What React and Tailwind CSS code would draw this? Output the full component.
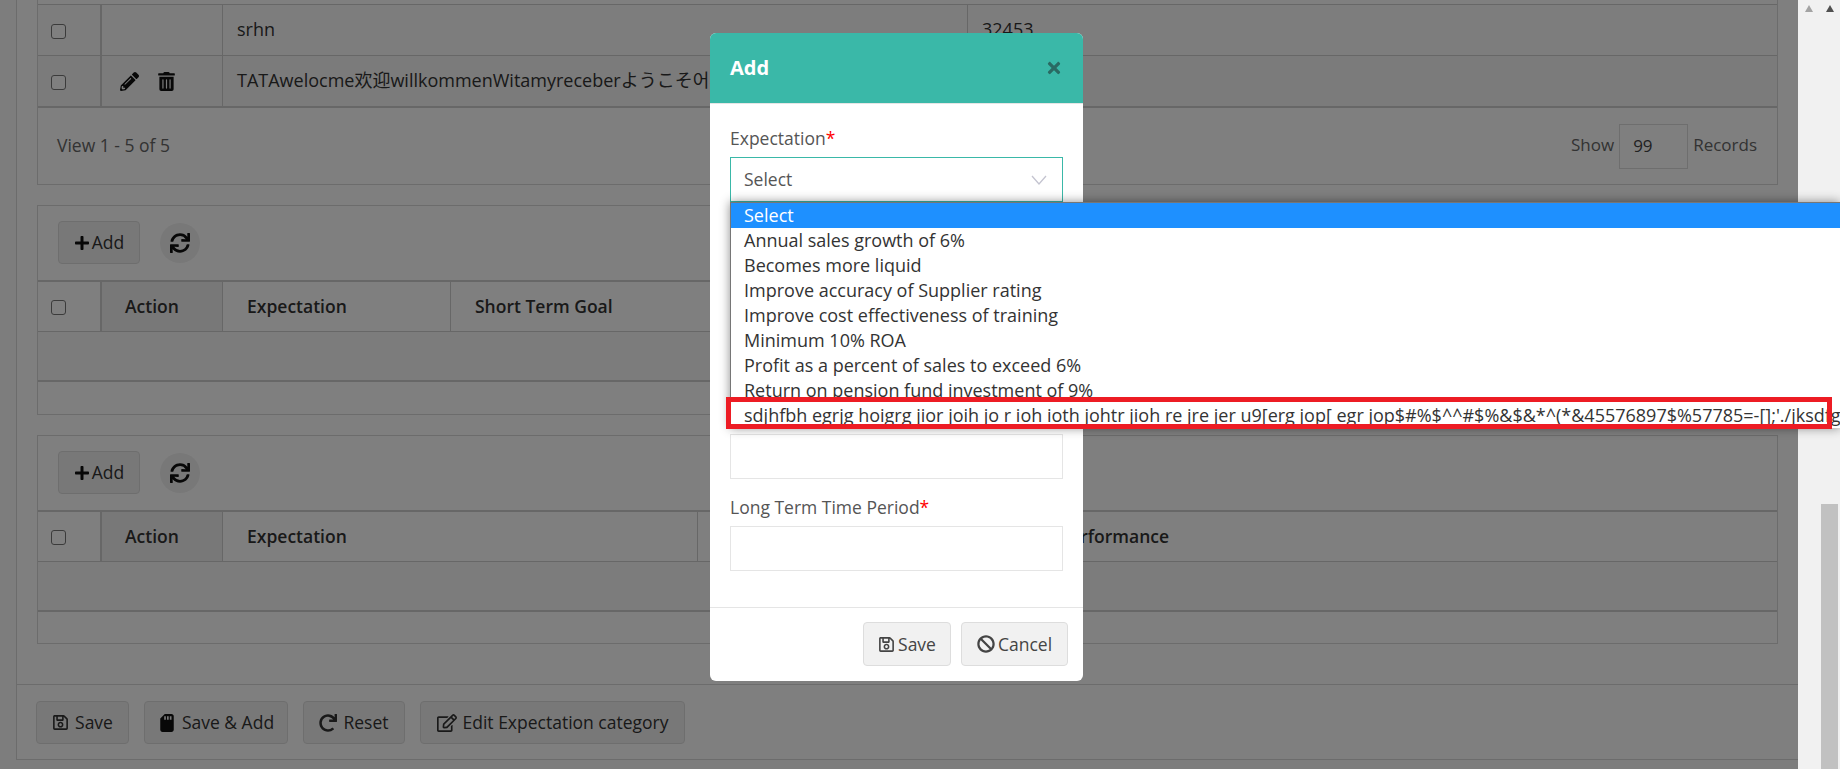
import { FaPencilAlt, FaTrashAlt, FaPlus, FaSync, FaRegSave, FaSdCard, FaRedo, FaRegEdit, FaBan, FaTimes } from "react-icons/fa";

const options = [
  "Annual sales growth of 6%",
  "Becomes more liquid",
  "Improve accuracy of Supplier rating",
  "Improve cost effectiveness of training",
  "Minimum 10% ROA",
  "Profit as a percent of sales to exceed 6%",
  "Return on pension fund investment of 9%",
  "sdjhfbh egrjg hoigrg jior joih jo r ioh ioth johtr jioh re jre jer u9[erg jop[ egr jop$#%$^^#$%&$&*^(*&45576897$%57785=-[];'./jksdfg hjkl",
];

function Check() {
  return <span className="block h-[15px] w-[15px] rounded-[3px] border border-[#767676] bg-white" />;
}

function ToolbarAndHead({ cols, heads }) {
  return (
    <>
      <div className="flex h-[74px] items-start gap-5 pl-5 pt-[15px]">
        <button className="flex h-[43px] w-[82px] items-center justify-center gap-[2px] rounded border border-[#ddd] bg-[#f1f1f1] text-[#333]">
          <FaPlus className="text-[16px] text-[#111]" />
          Add
        </button>
        <button className="mt-0.5 flex h-10 w-10 items-center justify-center rounded-full bg-[#f1f1f1]">
          <FaSync className="text-xl text-[#111]" />
        </button>
      </div>
      <div className={`grid h-[52px] border-y-2 border-b-[1px] border-[#cfcfcf] font-semibold text-[#333] ${cols}`}>
        <div className="flex items-center border-r-2 border-[#cfcfcf] pl-[13px] pt-[2px]">
          <Check />
        </div>
        <div className="flex items-center border-r border-[#cfcfcf] bg-[#f0f0f0] pl-[23px]">Action</div>
        {heads.map((h, i) => (
          <div key={h} className={`flex items-center whitespace-nowrap pl-6 ${i < heads.length - 1 ? "border-r border-[#cfcfcf]" : ""}`}>
            {h}
          </div>
        ))}
      </div>
      <div className="h-[50px] border-b-2 border-[#cfcfcf] bg-[#f9f9f9]" />
    </>
  );
}

function FooterButton({ icon, label, width }) {
  return (
    <button className={`flex h-[43px] items-center justify-center gap-[6px] rounded border border-[#ddd] bg-[#f1f1f1] text-[#333] ${width}`}>
      {icon}
      {label}
    </button>
  );
}

export default function App() {
  return (
    <div className="relative flex h-[769px] overflow-hidden font-['Open_Sans','Noto_Sans_CJK_SC',sans-serif] text-[17.5px]">
      <main className="relative w-[1798px] overflow-hidden bg-[#fafafa] pl-4">
        <div className="h-[760px] border-b border-l border-[#d8d8d8] bg-white">
          <div className="px-5">
            <div className="border-x border-b border-[#d8d8d8]">
              <div className="h-[5px] border-b border-[#cfcfcf]" />
              <div className="grid h-[51px] grid-cols-[64px_121px_745px_1fr] border-b border-[#cfcfcf] bg-[#fbfbfb] text-[18px]">
                <div className="flex items-center border-r-2 border-[#cfcfcf] pl-[13px] pt-[2px]">
                  <Check />
                </div>
                <div className="border-r border-[#cfcfcf]" />
                <div className="flex items-center border-r border-[#cfcfcf] pb-[2px] pl-[14px] text-[#333]">srhn</div>
                <div className="flex items-center pb-[2px] pl-[14px] text-[#333]">32453</div>
              </div>
              <div className="grid h-[52px] grid-cols-[64px_121px_1fr] border-b-2 border-[#cfcfcf] bg-[#f6f6f6] text-[18px]">
                <div className="flex items-center border-r-2 border-[#cfcfcf] pl-[13px] pt-[2px]">
                  <Check />
                </div>
                <div className="flex items-center gap-[18px] border-r border-[#cfcfcf] pl-[18px]">
                  <FaPencilAlt className="text-[19px] text-[#111]" />
                  <FaTrashAlt className="text-[19px] text-[#111]" />
                </div>
                <div className="flex items-center whitespace-nowrap pb-[2px] pl-[14px] text-[#333]">
                  TATAwelocme欢迎willkommenWitamyreceberようこそ어서
                </div>
              </div>
              <div className="flex h-[76px] items-center justify-between pl-[19px] pr-5 text-[#666]">
                <span className="pb-[2px]">View 1 - 5 of 5</span>
                <div className="flex items-center gap-[5px] text-[17px]">
                  <span className="pb-[2px]">Show</span>
                  <div className="flex h-[45px] w-[69px] items-center border border-[#ddd] pl-[13px] text-[#444]">99</div>
                  <span className="pb-[2px]">Records</span>
                </div>
              </div>
            </div>

            <div className="mt-5 h-[210px] border border-[#d8d8d8]">
              <ToolbarAndHead
                cols="grid-cols-[64px_121px_228px_1fr]"
                heads={["Expectation", "Short Term Goal"]}
              />
            </div>

            <div className="mt-5 h-[209px] border border-[#d8d8d8]">
              <ToolbarAndHead
                cols="grid-cols-[64px_121px_475px_243px_1fr]"
                heads={["Expectation", "Long Term Goal", "Long Term Performance"]}
              />
            </div>
          </div>

          <div className="mt-10 flex h-[75px] gap-[15px] border-t border-[#d8d8d8] pl-[19px] pt-4">
            <FooterButton width="w-[93px]" label="Save" icon={<FaRegSave className="text-[17px]" />} />
            <FooterButton width="w-[144px]" label="Save & Add" icon={<FaSdCard className="text-[18px] text-[#111]" />} />
            <FooterButton width="w-[102px]" label="Reset" icon={<FaRedo className="text-[18px]" />} />
            <FooterButton width="w-[265px]" label="Edit Expectation category" icon={<FaRegEdit className="text-[20px]" />} />
          </div>
        </div>

        <div className="absolute inset-0 bg-black/50" />

        <div className="absolute left-[710px] top-[33px] w-[373px] overflow-hidden rounded-md bg-white">
          <div className="flex h-[71px] items-center justify-between border-b border-[#e5e5e5] bg-[#3ab8a8] pl-5 pr-5">
            <span className="text-xl font-bold text-white">Add</span>
            <FaTimes className="text-[18px] text-[#2a6a63]" />
          </div>
          <div className="px-5 pt-[22px]">
            <div className="h-[31px] leading-6 text-[#555]">
              Expectation<span className="text-[#f00]">*</span>
            </div>
            <div className="flex h-[45px] items-center justify-between border border-[#3ab8a8] pl-[13px] pr-[15px] text-[#555]">
              Select
              <svg width="16" height="10" viewBox="0 0 16 10" fill="none" stroke="#c4c4d0" strokeWidth="1.3">
                <path d="M1 1 L8 9 L15 1" />
              </svg>
            </div>
            <div className="mt-[232px] h-[45px] border border-[#e5e5e5]" />
            <div className="mt-4 h-[31px] leading-6 text-[#555]">
              Long Term Time Period<span className="text-[#f00]">*</span>
            </div>
            <div className="h-[45px] border border-[#e5e5e5]" />
          </div>
          <div className="mt-9 flex h-[74px] justify-end gap-[10px] border-t border-[#e5e5e5] pr-[15px] pt-[14px]">
            <button className="flex h-11 w-[88px] items-center justify-center gap-[3px] rounded border border-[#ddd] bg-[#f1f1f1] text-[#444]">
              <FaRegSave className="text-[17px]" />
              Save
            </button>
            <button className="flex h-11 w-[107px] items-center justify-center gap-[3px] rounded border border-[#ddd] bg-[#f1f1f1] text-[#444]">
              <FaBan className="text-[18px]" />
              Cancel
            </button>
          </div>
        </div>
      </main>

      <div className="flex w-[21px] flex-col items-center bg-[#f1f1f1] pt-[5px]">
        <span className="h-0 w-0 border-x-[4px] border-b-[7px] border-x-transparent border-b-[#a3a3a3]" />
      </div>
      <div className="flex w-[21px] flex-col items-center justify-between bg-[#f1f1f1] pt-[5px]">
        <span className="h-0 w-0 border-x-[4px] border-b-[7px] border-x-transparent border-b-[#505050]" />
        <div className="h-[265px] w-[17px] bg-[#c1c1c1]" />
      </div>

      <div className="absolute left-[730px] right-0 top-[202px] overflow-hidden border-l border-t border-[#767676] bg-white text-[18px] leading-[25px] text-[#333] shadow-[0_0_10px_rgba(0,0,0,0.45)]">
        <div className="h-[25px] bg-[#1e90ff] pl-[13px] text-white">Select</div>
        {options.map((o) => (
          <div key={o} className="h-[25px] whitespace-nowrap pl-[13px]">
            {o}
          </div>
        ))}
      </div>

      <div className="absolute left-[726px] top-[397px] h-[32px] w-[1106px] border-[5px] border-[#ed1c24]" />
    </div>
  );
}
